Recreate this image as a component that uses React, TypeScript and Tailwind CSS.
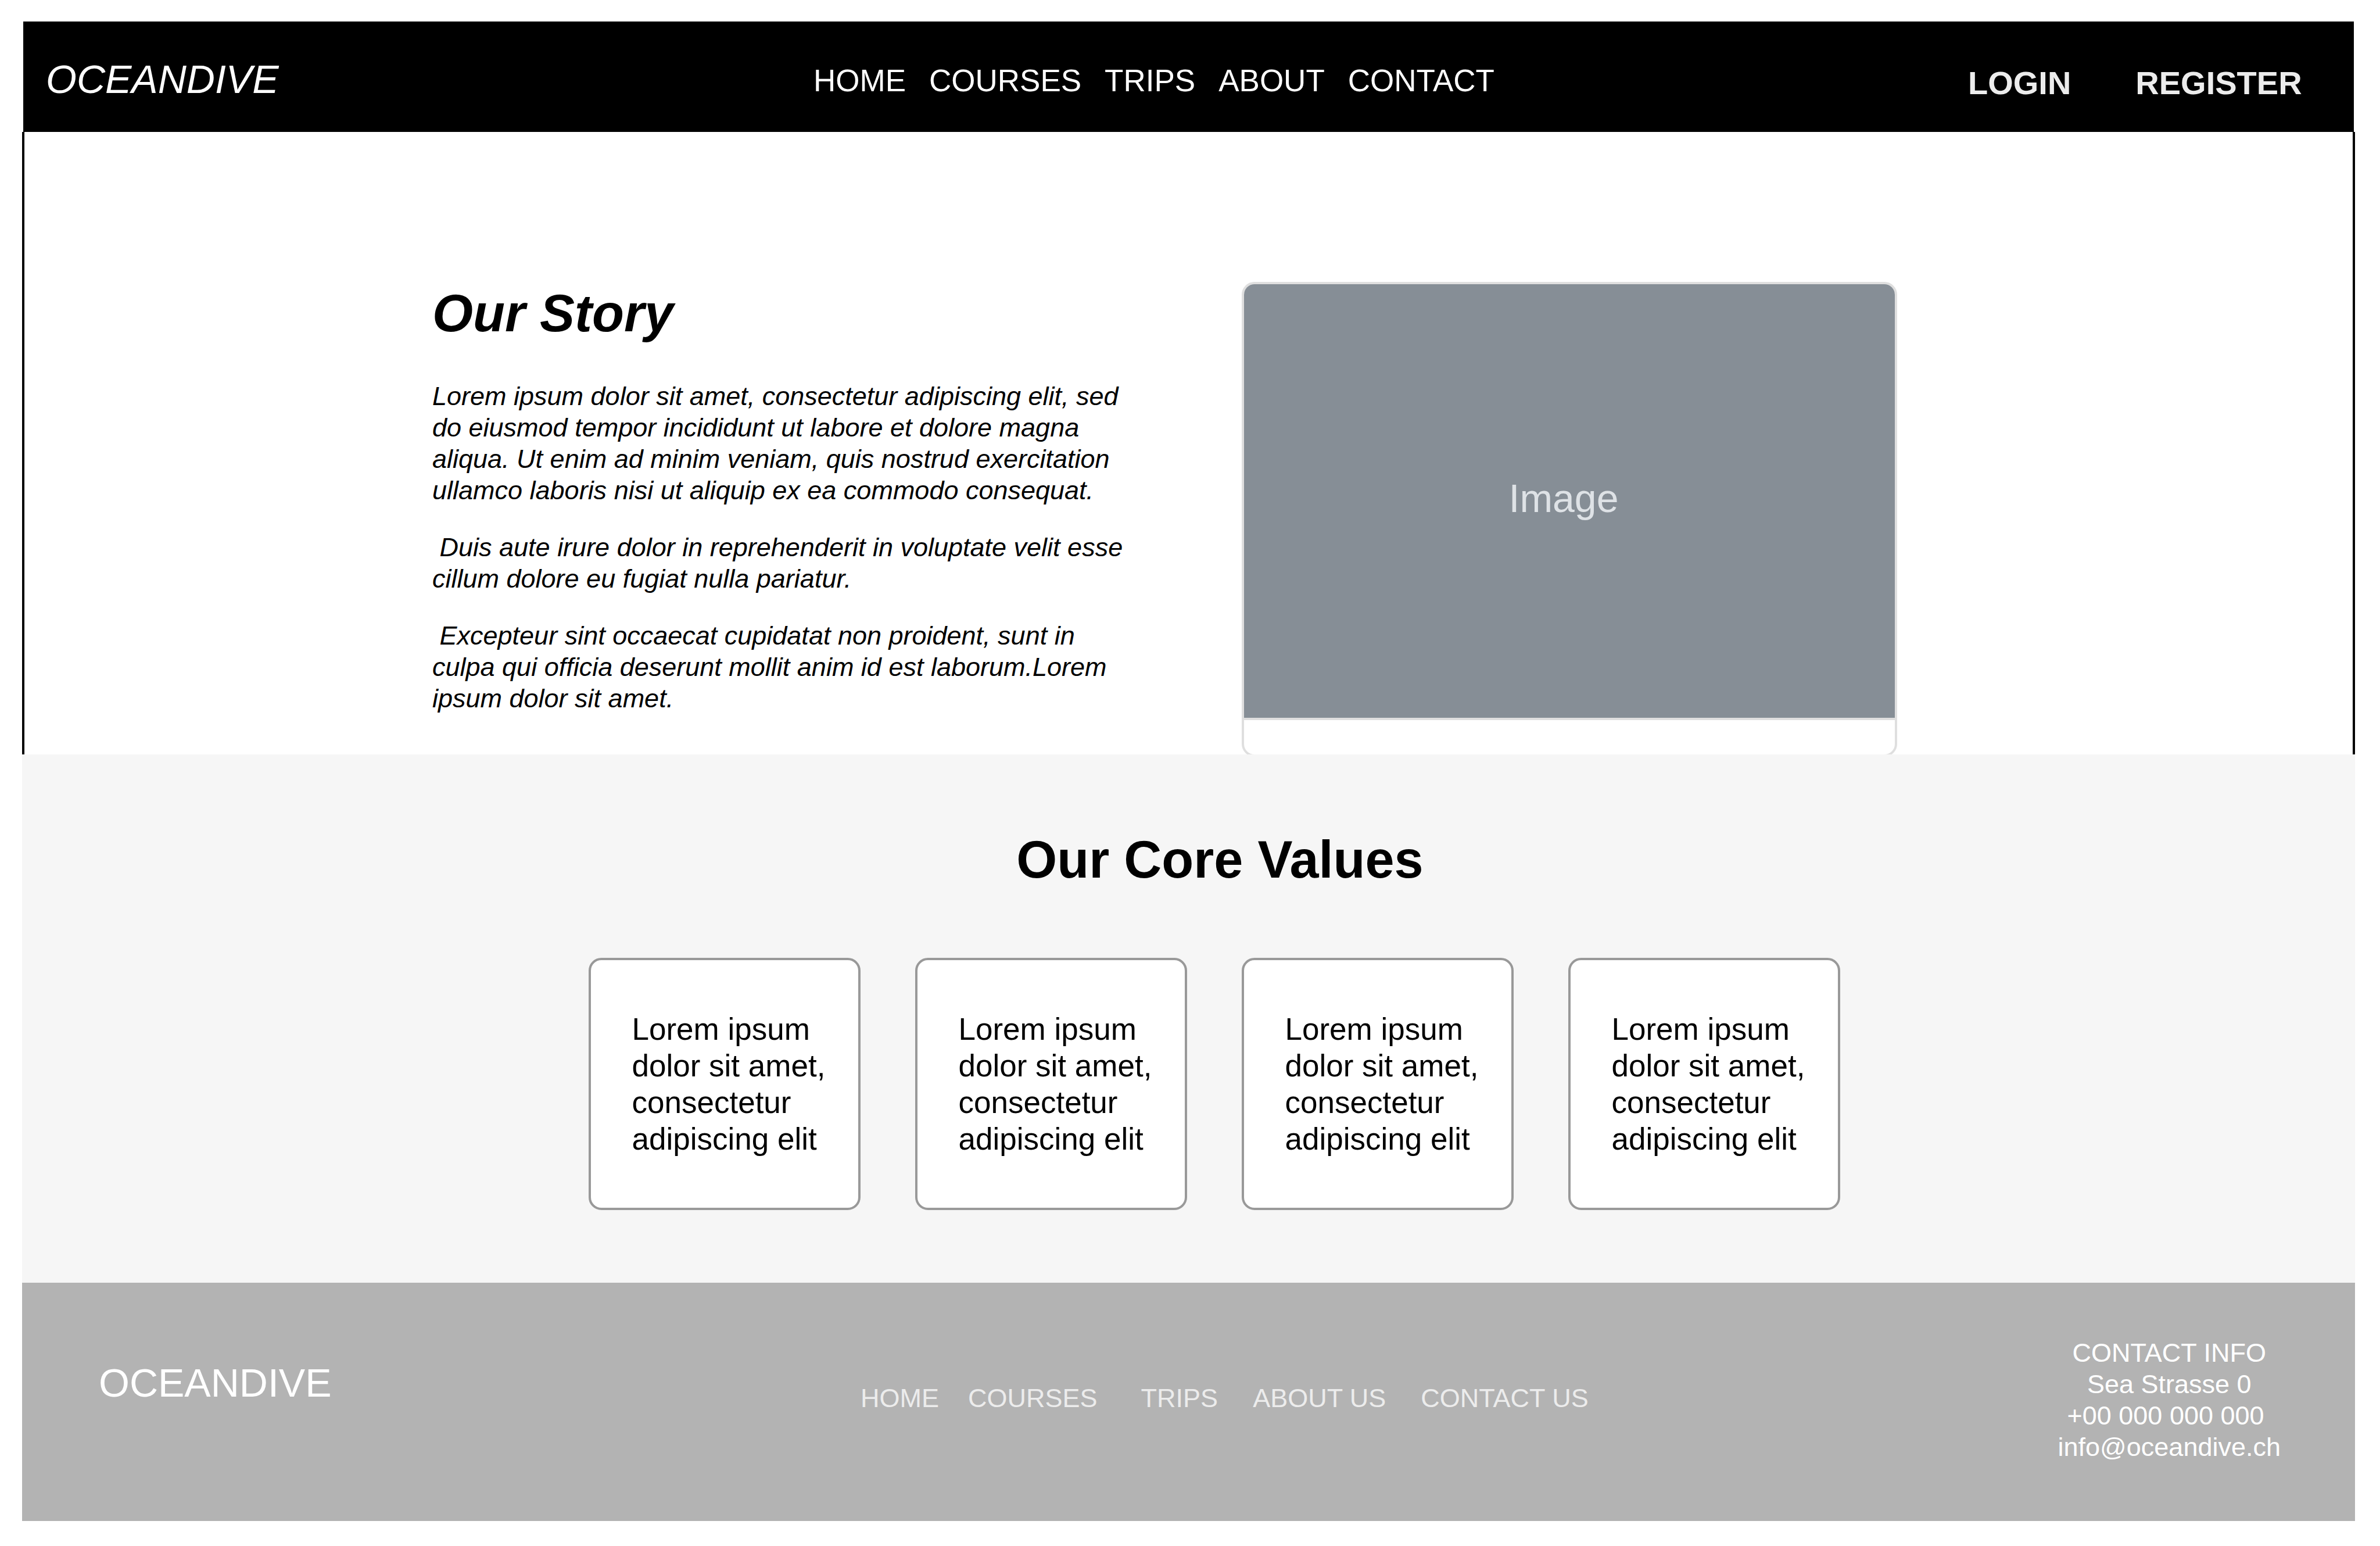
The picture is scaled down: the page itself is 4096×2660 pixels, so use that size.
type LinkItem = { label: string; space: string };

const mainLinks = ["HOME", "COURSES", "TRIPS", "ABOUT", "CONTACT"];

const footerLinks: LinkItem[] = [
  { label: "HOME", space: "" },
  { label: "COURSES", space: "ml-[50px]" },
  { label: "TRIPS", space: "ml-[75px]" },
  { label: "ABOUT US", space: "ml-[60px]" },
  { label: "CONTACT US", space: "ml-[60px]" },
];

const values = [1, 2, 3, 4];

function Header() {
  return (
    <header className="mx-[2px] grid grid-cols-[1360fr_1987fr_664fr] items-start bg-black pt-[59px] pb-[50px] text-white">
      <a href="#home" className="pl-[39px] text-[68px] leading-[80px] italic">
        OCEANDIVE
      </a>
      <nav aria-label="Main" className="mt-[11px] flex gap-[40px] text-[53px] leading-[63px]">
        {mainLinks.map((label) => (
          <a key={label} href={`#${label.toLowerCase()}`}>
            {label}
          </a>
        ))}
      </nav>
      <div className="mt-[13px] flex gap-[111px] text-[56px] leading-[68px] text-[#ececec]">
        <button type="button" className="font-bold">
          LOGIN
        </button>
        <button type="button" className="font-bold">
          REGISTER
        </button>
      </div>
    </header>
  );
}

function Story() {
  return (
    <section className="grid grid-cols-[702fr_1218fr_175fr_1128fr_784fr] items-start overflow-hidden border-x-4 border-black bg-white pt-[258px]">
      <div className="col-start-2 text-[45px] leading-[54px] whitespace-pre-wrap italic">
        <h1 className="text-[90px] leading-[108px] font-bold">Our Story</h1>
        <p className="mt-[62px]">
          Lorem ipsum dolor sit amet, consectetur adipiscing elit, sed do eiusmod tempor incididunt ut labore et dolore
          magna aliqua. Ut enim ad minim veniam, quis nostrud exercitation ullamco laboris nisi ut aliquip ex ea commodo
          consequat.
        </p>
        <p className="mt-[44px]">
          {" "}Duis aute irure dolor in reprehenderit in voluptate velit esse cillum dolore eu fugiat nulla pariatur.
        </p>
        <p className="mt-[44px]">
          {" "}Excepteur sint occaecat cupidatat non proident, sunt in culpa qui officia deserunt mollit anim id est
          laborum.Lorem ipsum dolor sit amet.
        </p>
      </div>
      <figure className="col-start-4 -mb-1 overflow-hidden rounded-[22px] border-4 border-[#dfdfdf] bg-white">
        <div className="flex h-[750px] items-center justify-center border-b-4 border-[#dfdfdf] bg-[#868e96] pr-[20px] pb-[10px] text-[68px] leading-[80px] text-[#dee2e6]">
          Image
        </div>
        <figcaption className="h-[59px]" />
      </figure>
    </section>
  );
}

function CoreValues() {
  return (
    <section className="bg-[#f6f6f6] pt-[127px] pb-[125px] pl-[88px]">
      <h2 className="pl-[20px] text-center text-[90px] leading-[108px] font-bold">Our Core Values</h2>
      <ul className="mt-[115px] flex justify-center gap-[94px]">
        {values.map((value) => (
          <li
            key={value}
            className="w-[468px] rounded-[22px] border-4 border-[#999999] bg-white py-[87px] pr-[40px] pl-[71px] text-[53px] leading-[63px]"
          >
            Lorem ipsum dolor sit amet, consectetur adipiscing elit
          </li>
        ))}
      </ul>
    </section>
  );
}

function Footer() {
  return (
    <footer className="grid grid-cols-[1312fr_2062fr_auto] items-start bg-[#b3b3b3] pt-[94px] pr-[128px] pb-[100px] pl-[132px] text-[45px] leading-[54px] text-white">
      <a href="#home" className="mt-[38px] text-[68px] leading-[80px]">
        OCEANDIVE
      </a>
      <nav aria-label="Footer" className="mt-[78px] flex text-[#ececec]">
        {footerLinks.map(({ label, space }) => (
          <a key={label} href={`#${label.toLowerCase().replace(" ", "-")}`} className={space}>
            {label}
          </a>
        ))}
      </nav>
      <address className="text-center not-italic">
        <p>CONTACT INFO</p>
        <p>Sea Strasse 0</p>
        <p>
          <a href="tel:+00000000000">{"+00 000 000 000\u00a0"}</a>
        </p>
        <p>
          <a href="mailto:info@oceandive.ch">info@oceandive.ch</a>
        </p>
      </address>
    </footer>
  );
}

export default function App() {
  return (
    <div className="bg-white pt-[37px] pr-[43px] pb-[44px] pl-[38px] font-['Liberation_Sans',Arial,sans-serif] text-black">
      <Header />
      <main>
        <Story />
        <CoreValues />
      </main>
      <Footer />
    </div>
  );
}
